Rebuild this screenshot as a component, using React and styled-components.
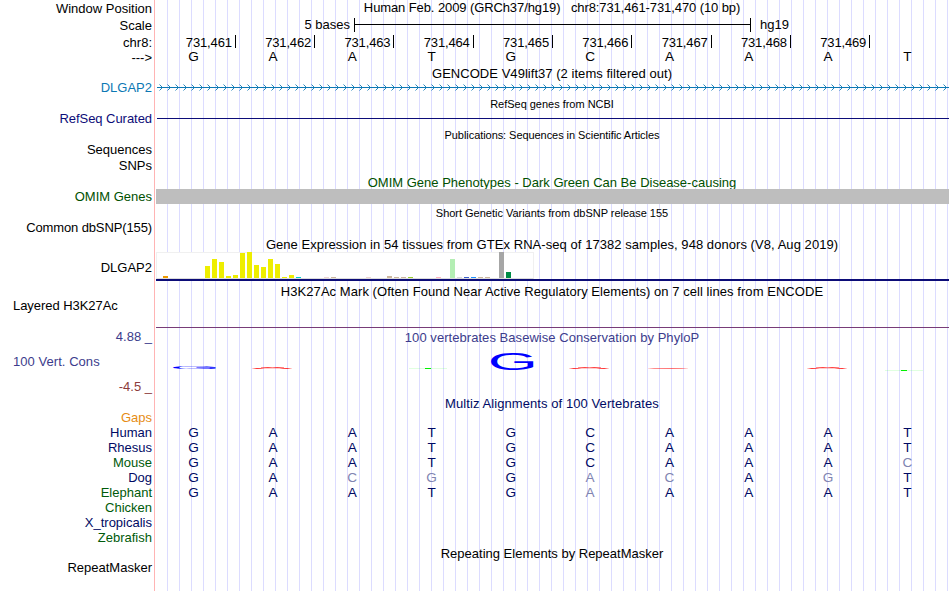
import styled, { createGlobalStyle } from "styled-components";

const GlobalStyle = createGlobalStyle`
  body {
    margin: 0;
    background: #fff;
  }
`;

const Browser = styled.div`
  box-sizing: border-box;
  width: 950px;
  height: 591px;
  overflow: hidden;
  font-family: "Liberation Sans", Arial, sans-serif;
  font-size: 13px;
  line-height: 15px;
  color: #000;
  white-space: pre;
  /* pink divider + guidelines every 12px */
  background:
    linear-gradient(#ffb4b4, #ffb4b4) 154px 0 / 1px 100% no-repeat,
    repeating-linear-gradient(90deg, transparent 0 11px, #dcdcff 11px 12px) 156px 0 / 794px 100% no-repeat;
`;

const Row = styled.div`
  display: flex;
  height: ${(p) => p.$h}px;
`;

const Label = styled.div`
  box-sizing: border-box;
  flex: none;
  width: 156px;
  padding-top: ${(p) => p.$pad || 0}px;
  padding-left: 13px;
  padding-right: 4px;
  text-align: ${(p) => (p.$left ? "left" : "right")};
  letter-spacing: ${(p) => p.$space || 0}px;
  color: ${(p) => p.$color || "inherit"};
`;

const Data = styled.div`
  width: 793px;
  flex: none;
`;

const Title = styled.div`
  box-sizing: border-box;
  height: ${(p) => p.$h || 15}px;
  padding-top: ${(p) => p.$pad || 0}px;
  padding-right: 1px;
  text-align: center;
  font-size: ${(p) => (p.$small ? 11 : 13)}px;
  letter-spacing: ${(p) => p.$space || 0}px;
  color: ${(p) => p.$color || "inherit"};
`;

const ScaleRow = styled(Data)`
  display: flex;
  padding-top: 1px;
`;

const ScaleText = styled.div`
  width: 194px;
  text-align: right;
`;

const ScaleBar = styled.div`
  box-sizing: border-box;
  width: 397px;
  height: 14px;
  margin: 1px 9px 0 4px;
  border: solid #000;
  border-width: 0 1px;
  background: linear-gradient(#000, #000) 0 6px / 100% 1px no-repeat;
`;

const Columns = styled(Data)`
  display: grid;
  grid-template-columns: repeat(10, 79.3px);
`;

const Coordinate = styled.div`
  box-sizing: border-box;
  height: 13px;
  margin: 1px -0.5px 0 0;
  padding-right: 3px;
  border-right: 1px solid #000;
  text-align: right;
  letter-spacing: -0.15px;
`;

const Base = styled.div`
  padding-right: 4px;
  text-align: center;
  font-size: 13.6px;
  color: ${(p) => (p.$muted ? "#8084b1" : p.$color || "#000")};
`;

const Line = styled.div`
  height: 1px;
  margin: ${(p) => p.$top}px 0 0 ${(p) => p.$left || 0}px;
  background: ${(p) => p.$color};
`;

const Block = styled.div`
  height: 15px;
  background: #bebebe;
`;

const Expression = styled.div`
  box-sizing: border-box;
  display: flex;
  align-items: flex-end;
  gap: 2px;
  width: 378px;
  height: 27px;
  padding-left: 6px;
  border: 1px solid #f0f0f0;
  border-bottom-color: #dcdcdc;
  border-top: 0;
  background: linear-gradient(#f0f0f0, #f0f0f0) 0 0 / 100% 1px no-repeat #fff;
`;

const Bar = styled.div`
  flex: none;
  width: 5px;
`;

const GeneLine = styled.div`
  height: 2px;
  background: #0c0c78;
`;

const ConsLabels = styled.div`
  display: flex;
  flex-direction: column;
  gap: 10px;
  padding-top: 1px;
`;

const Svg = styled.svg`
  display: block;
`;

const NAVY = "#000a64";
const GREEN = "#005a0a";
const YELLOW = "#eeee00";
const TAN = "#cdb79e";

const coordinates = [461, 462, 463, 464, 465, 466, 467, 468, 469];

// one entry per tissue: [height, color]
const tissues = [
  [2, "#ee9a00"], [0], [0], [0], [0], [0],
  [12, YELLOW], [19, YELLOW], [16, YELLOW], [2, YELLOW], [3, YELLOW], [25, YELLOW], [26, YELLOW],
  [13, YELLOW], [11, YELLOW], [19, YELLOW], [14, YELLOW], [1, YELLOW], [3, YELLOW],
  [1, "#00cdcd"], [0], [0], [0], [1, "#eed5d2"], [1, TAN], [0], [0], [0], [0],
  [1, "#eed5d2"], [0], [0], [2, TAN], [1, TAN], [1, TAN], [1, "#9acd32"], [0], [0], [0],
  [1, "#ffb6c1"], [0], [19, "#b4eeb4"], [1, "#d9d9d9"], [1, "#3a5fcd"], [1, "#1e90ff"],
  [1, TAN], [1, TAN], [0], [26, "#a6a6a6"], [6, "#008b45"],
];

// lower case marks a base that differs from human
const species = [
  { name: "Gaps", color: "#e68c14", bases: "" },
  { name: "Human", color: NAVY, bases: "GAATGCAAAT" },
  { name: "Rhesus", color: NAVY, bases: "GAATGCAAAT" },
  { name: "Mouse", color: GREEN, bases: "GAATGCAAAc" },
  { name: "Dog", color: NAVY, bases: "GAcgGacAgT" },
  { name: "Elephant", color: GREEN, bases: "GAATGaAAAT" },
  { name: "Chicken", color: GREEN, bases: "" },
  { name: "X_tropicalis", color: NAVY, bases: "" },
  { name: "Zebrafish", color: GREEN, bases: "" },
];

function Bases({ bases, color }) {
  return (
    <Columns>
      {bases.split("").map((b, i) => (
        <Base key={i} $color={color} $muted={b !== b.toUpperCase()}>
          {b.toUpperCase()}
        </Base>
      ))}
    </Columns>
  );
}

function TitleRow({ children, h = 16, ...rest }) {
  return (
    <Row $h={h}>
      <Label />
      <Data>
        <Title $h={h} {...rest}>{children}</Title>
      </Data>
    </Row>
  );
}

function Intron() {
  return (
    <Svg width="793" height="15">
      <defs>
        <pattern id="chevron" x="3" y="0" width="8" height="15" patternUnits="userSpaceOnUse">
          <path d="M0.5 4.5l3 3l-3 3" fill="none" stroke="#0c78b4" strokeWidth="0.9" />
        </pattern>
      </defs>
      <rect x="1" y="7" width="792" height="1" fill="#0c78b4" />
      <rect x="1" width="792" height="15" fill="url(#chevron)" />
    </Svg>
  );
}

// flattened A: two feet with a slightly raised middle
function LowA({ x, flat }) {
  return (
    <g transform={`translate(${x} 23)`}>
      <rect y="0" width="40" height="1" fill={flat ? "url(#flat)" : "url(#feet)"} />
      {!flat && <rect x="9" y="-1" width="23" height="1" fill="url(#peak)" />}
    </g>
  );
}

function LowT({ x, y }) {
  return (
    <g transform={`translate(${x} ${y})`}>
      <rect width="38" height="1" fill="#00ff00" opacity="0.12" />
      <rect x="16" width="6" height="1" fill="#00f000" />
    </g>
  );
}

function Conservation() {
  return (
    <Svg width="793" height="51">
      <defs>
        <linearGradient id="feet">
          <stop offset="0" stopColor="#f00" stopOpacity="0.1" />
          <stop offset="0.12" stopColor="#f00" stopOpacity="0.8" />
          <stop offset="0.22" stopColor="#f00" stopOpacity="0.65" />
          <stop offset="0.32" stopColor="#f00" stopOpacity="0.2" />
          <stop offset="0.68" stopColor="#f00" stopOpacity="0.2" />
          <stop offset="0.78" stopColor="#f00" stopOpacity="0.65" />
          <stop offset="0.88" stopColor="#f00" stopOpacity="0.8" />
          <stop offset="1" stopColor="#f00" stopOpacity="0.1" />
        </linearGradient>
        <linearGradient id="flat">
          <stop offset="0" stopColor="#f00" stopOpacity="0.1" />
          <stop offset="0.15" stopColor="#f00" stopOpacity="0.45" />
          <stop offset="0.6" stopColor="#f00" stopOpacity="0.55" />
          <stop offset="0.85" stopColor="#f00" stopOpacity="0.45" />
          <stop offset="1" stopColor="#f00" stopOpacity="0.1" />
        </linearGradient>
        <linearGradient id="peak">
          <stop offset="0" stopColor="#f00" stopOpacity="0.4" />
          <stop offset="0.3" stopColor="#f00" stopOpacity="0.75" />
          <stop offset="0.5" stopColor="#f00" stopOpacity="0.45" />
          <stop offset="0.7" stopColor="#f00" stopOpacity="0.75" />
          <stop offset="1" stopColor="#f00" stopOpacity="0.4" />
        </linearGradient>
      </defs>
      <g fill="#0000ff" fontSize="100">
        <text transform="translate(13.8 24) scale(0.65 0.041)">G</text>
        <text transform="translate(331.8 24.7) scale(0.645 0.237)">G</text>
      </g>
      <LowA x={96} />
      <LowT x={253} y={23} />
      <LowA x={413} />
      <LowA x={492} flat />
      <LowA x={651} />
      <LowT x={729} y={25} />
    </Svg>
  );
}

function App() {
  return (
    <Browser>
      <GlobalStyle />
      <Row $h={16}>
        <Label $pad={1}>Window Position</Label>
        <Data>
          <Title $space={-0.1}>{"Human Feb. 2009 (GRCh37/hg19)   chr8:731,461-731,470 (10 bp)"}</Title>
        </Data>
      </Row>
      <Row $h={18}>
        <Label $pad={2}>Scale</Label>
        <ScaleRow>
          <ScaleText>5 bases</ScaleText>
          <ScaleBar />
          hg19
        </ScaleRow>
      </Row>
      <Row $h={15}>
        <Label $pad={1}>chr8:</Label>
        <Columns>
          {coordinates.map((n) => (
            <Coordinate key={n}>731,{n}</Coordinate>
          ))}
        </Columns>
      </Row>
      <Row $h={16}>
        <Label $pad={1}>{"--->"}</Label>
        <Bases bases="GAATGCAAAT" />
      </Row>
      <TitleRow h={15} $pad={1} $space={0.04}>GENCODE V49lift37 (2 items filtered out)</TitleRow>
      <Row $h={15}>
        <Label $color="#0c78b4">DLGAP2</Label>
        <Intron />
      </Row>
      <TitleRow $small $pad={2} $space={-0.02}>RefSeq genes from NCBI</TitleRow>
      <Row $h={15}>
        <Label $color="#0c0c78" $space={-0.05}>RefSeq Curated</Label>
        <Data>
          <Line $top={7} $left={1} $color="#0c0c78" />
        </Data>
      </Row>
      <TitleRow $small $pad={2} $space={-0.06}>Publications: Sequences in Scientific Articles</TitleRow>
      <Row $h={15}>
        <Label>Sequences</Label>
      </Row>
      <Row $h={16}>
        <Label $pad={1}>SNPs</Label>
      </Row>
      <TitleRow $pad={2} $color="#005000">OMIM Gene Phenotypes - Dark Green Can Be Disease-causing</TitleRow>
      <Row $h={15}>
        <Label $color="#005000">OMIM Genes</Label>
        <Data>
          <Block />
        </Data>
      </Row>
      <TitleRow $small $pad={2} $space={-0.02}>Short Genetic Variants from dbSNP release 155</TitleRow>
      <Row $h={15}>
        <Label $space={-0.12}>Common dbSNP(155)</Label>
      </Row>
      <TitleRow h={17} $pad={2} $space={0.055}>
        Gene Expression in 54 tissues from GTEx RNA-seq of 17382 samples, 948 donors (V8, Aug 2019)
      </TitleRow>
      <Row $h={29}>
        <Label $pad={8}>DLGAP2</Label>
        <Data>
          <Expression>
            {tissues.map(([height, color], i) => (
              <Bar key={i} style={{ height, background: color }} />
            ))}
          </Expression>
          <GeneLine />
        </Data>
      </Row>
      <TitleRow h={17} $pad={3} $space={0.055}>
        H3K27Ac Mark (Often Found Near Active Regulatory Elements) on 7 cell lines from ENCODE
      </TitleRow>
      <Row $h={30}>
        <Label $left $space={-0.05}>Layered H3K27Ac</Label>
        <Data>
          <Line $top={29} $color="#783c78" />
        </Data>
      </Row>
      <Row $h={68}>
        <ConsLabels>
          <Label $color="#3c3c8c">4.88 _</Label>
          <Label $left $color="#3c3c8c" $space={0.05}>100 Vert. Cons</Label>
          <Label $color="#8c3c3c">-4.5 _</Label>
        </ConsLabels>
        <Data>
          <Title $h={17} $pad={2} $space={0.05} $color="#3c3c8c">
            100 vertebrates Basewise Conservation by PhyloP
          </Title>
          <Conservation />
        </Data>
      </Row>
      <TitleRow h={14} $space={0.08} $color={NAVY}>Multiz Alignments of 100 Vertebrates</TitleRow>
      {species.map((s) => (
        <Row key={s.name} $h={15}>
          <Label $color={s.color}>{s.name}</Label>
          <Bases bases={s.bases} color={NAVY} />
        </Row>
      ))}
      <TitleRow h={15} $pad={1}>Repeating Elements by RepeatMasker</TitleRow>
      <Row $h={15}>
        <Label>RepeatMasker</Label>
      </Row>
    </Browser>
  );
}

export default App;
